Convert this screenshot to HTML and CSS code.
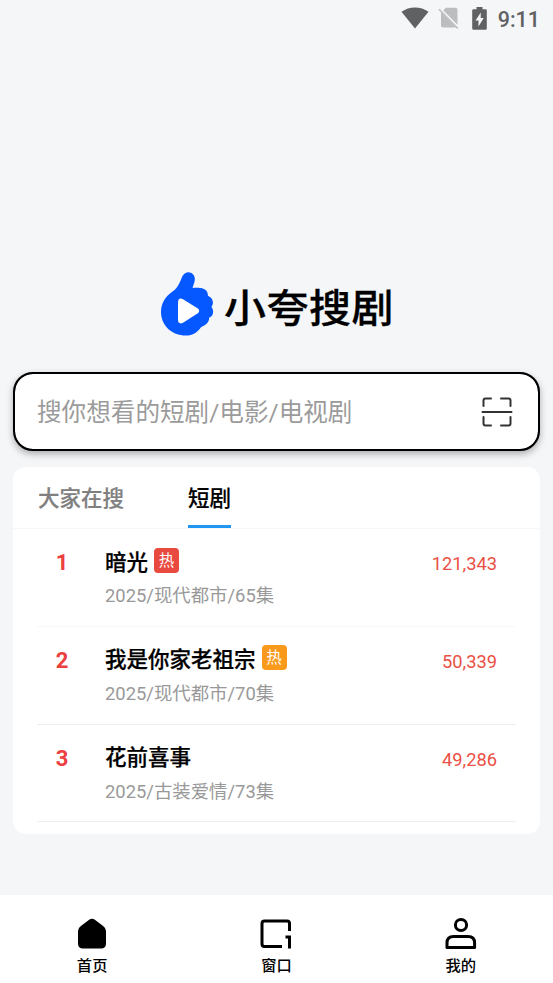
FILE: index.html
```html
<!DOCTYPE html>
<html lang="zh-CN">
<head>
<meta charset="utf-8">
<title>小夸搜剧</title>
<link rel="stylesheet" href="styles.css">
</head>
<body>
<header class="status">
  <svg class="wifi" width="28" height="22" viewBox="0 0 28 22"><path d="M14 21.500 0.500 4.800Q6.500.4 14 .4T27.500 4.800Z" fill="#606163"/></svg>
  <svg class="sim" width="22" height="24" viewBox="0 0 22 24"><path d="M5.200 4.200 8 1.800h9.500q2 0 2 2v15ZM3.400 6.500l14.300 15H5q-2 0-2-2V7Z" fill="#bcbdbf"/><path d="M1 3.300 19.800 22.500" stroke="#bcbdbf" stroke-width="1.600"/></svg>
  <svg class="battery" width="15" height="23" viewBox="0 0 15 23"><path d="M4.500 0h6v2.200h3q1.300 0 1.300 1.300v18q0 1.300-1.300 1.300h-12Q.2 22.800.2 21.500v-18Q.2 2.200 1.500 2.200h3Z" fill="#606163"/><path d="M8.800 5.500 3.500 13.500h3v6l5.200-8.500h-3Z" fill="#f4f5f7"/></svg>
  <span class="time">9:11</span>
</header>
<main>
  <h1 class="brand">
    <svg width="54" height="66" viewBox="0 0 54 66"><path d="M22.500 5C24.500 1.500 28 .3 31 1.800c4 2 4.500 6.200 3.200 10l-1.700 5.200c4-.3 8-.3 11.400 1 2.800 1.300 4.200 3.800 4 6.700 5 1.800 6.500 7.500 3.500 11.300 3 3.500 2 9-2.300 10.800.3 4.500-3 7.200-8.100 9.400C37 61.500 33 64.500 26 64.500 11.500 64.500 1 54 1 41c0-9 4.500-15.500 11.500-20.500C18.500 16.500 20 10.500 22.500 5Z" fill="#0558ff"/><path d="M18 31.500v17c0 3.500 2 4.800 5 3.200l14.500-9.200c2.300-1.600 2.300-3.700 0-5.200L23 28.200C20 26.500 18 27.800 18 31.500Z" fill="#fff"/></svg>
    <span>小夸搜剧</span>
  </h1>
  <div class="search">
    <span class="placeholder">搜你想看的短剧/电影/电视剧</span>
    <svg width="32" height="32" viewBox="0 0 32 32" fill="none" stroke="#333" stroke-width="2" stroke-linecap="round"><path d="M2.500 10V4.500q0-2 2-2H10M20 2.500h7.500q2 0 2 2V10M2.500 21v6.500q0 2 2 2H10M20 29.500h7.500q2 0 2-2V21M1.500 16h29"/></svg>
  </div>
  <section class="card">
    <nav class="tabs"><span class="tab">大家在搜</span><span class="tab active">短剧</span></nav>
    <ol class="list">
      <li class="row"><span class="rank">1</span><div class="info"><div class="title">暗光<span class="hot red">热</span></div><div class="meta">2025/现代都市/65集</div></div><span class="count">121,343</span></li>
      <li class="row"><span class="rank">2</span><div class="info"><div class="title">我是你家老祖宗<span class="hot">热</span></div><div class="meta">2025/现代都市/70集</div></div><span class="count">50,339</span></li>
      <li class="row"><span class="rank">3</span><div class="info"><div class="title">花前喜事</div><div class="meta">2025/古装爱情/73集</div></div><span class="count">49,286</span></li>
    </ol>
  </section>
</main>
<footer class="bottom">
  <a class="item"><svg width="34" height="34" viewBox="0 0 34 34"><path d="M14.500 2.600q2.500-1.600 5 0l8.300 6.200Q31 11 31 14v12.500q0 5-5 5H8q-5 0-5-5V14q0-3 3.200-5.200Z"/></svg><span>首页</span></a>
  <a class="item"><svg width="34" height="34" viewBox="0 0 34 34" fill="none" stroke="#000" stroke-width="3"><path d="M23 29.500H5.500Q3 29.500 3 27V6.500Q3 4 5.500 4h22.500q2.500 0 2.500 2.500V14"/><path d="M26.500 20h4v11.500"/></svg><span>窗口</span></a>
  <a class="item"><svg width="34" height="34" viewBox="0 0 34 34" fill="none" stroke="#000" stroke-width="3"><circle cx="17" cy="8" r="5.600"/><path d="M3 30.500v-4.500q0-6.500 6.500-6.500h14.600q6.500 0 6.500 6.500v4.500Z" stroke-linejoin="round"/></svg><span>我的</span></a>
</footer>
</body>
</html>
```
FILE: styles.css
```css
* { box-sizing: border-box; }
body {
  margin: 0;
  height: 983px;
  display: flex;
  flex-direction: column;
  overflow: hidden;
  background: #f4f6f8;
  color: #000;
  font-family: Roboto, "Noto Sans CJK SC", sans-serif;
}
svg { display: block; flex: none; }
.status {
  height: 38px;
  padding: 0 13px 2px 0;
  display: flex;
  align-items: center;
  justify-content: flex-end;
  color: #606163;
}
.sim { margin-left: 9px; }
.battery { margin-left: 12px; }
.time { margin-left: 11px; font-size: 21.500px; font-weight: 500; line-height: 38px; padding-top: 3px; }
main { flex: 1; padding: 233px 13px 0; }
.brand {
  margin: 0 0 35px;
  height: 66px;
  display: flex;
  align-items: center;
  padding-left: 147px;
  font-size: 42px;
  font-weight: 500;
  line-height: 66px;
}
.brand span {
  margin-left: 10px;
  letter-spacing: .5px;
  white-space: nowrap;
  transform: translateY(5px) scaleY(.93);
  -webkit-text-stroke: .3px #000;
}
.search {
  height: 79px;
  display: flex;
  align-items: center;
  justify-content: space-between;
  padding: 0 25px 0 22px;
  border: 2px solid #000;
  outline: .5px solid #000;
  outline-offset: -2.500px;
  border-radius: 20px;
  background: #fff;
  box-shadow: 0 3px 7px rgba(0, 0, 0, .3);
}
.placeholder { font-size: 24.600px; color: #9b9b9b; line-height: 36px; padding-top: 3px; }
.card {
  margin-top: 16px;
  height: 367px;
  border-radius: 13px;
  background: #fff;
}
.tabs {
  display: flex;
  gap: 64px;
  height: 62px;
  padding: 0 25px;
  border-bottom: 1px solid #f8f8f8;
}
.tab { height: 61px; font-size: 21.500px; font-weight: 500; line-height: 63px; color: #808080; -webkit-text-stroke: .2px; }
.tab.active { color: #000; border-bottom: 3px solid #2196f3; }
.list { list-style: none; margin: 0; padding: 0 24px; }
.row {
  height: 97.800px;
  display: flex;
  align-items: flex-start;
  border-bottom: 1px solid #eee;
}
.row:first-child { border-color: #f8f8f8; }
.rank { width: 50px; margin-right: 18px; text-align: center; color: #ed4040; font-size: 22px; font-weight: 700; line-height: 30px; padding-top: 19px; }
.info { flex: 1; padding-top: 15px; }
.title { display: flex; align-items: center; height: 32px; font-size: 21.500px; font-weight: 500; -webkit-text-stroke: .25px; }
.hot { width: 25px; height: 25px; margin-left: 6px; border-radius: 4px; background: #fa9a1d; color: #fff; font-size: 15.500px; font-weight: 400; line-height: 27px; text-align: center; -webkit-text-stroke: 0; }
.hot.red { background: #e94a3f; }
.meta { margin-top: 5px; font-size: 18.400px; line-height: 30px; color: #999; }
.count { padding: 20px 19px 0 0; font-size: 18.300px; line-height: 30px; color: #ea5045; }
.bottom { height: 88px; display: flex; background: #fff; }
.item { flex: 1; display: flex; flex-direction: column; align-items: center; padding-top: 22px; font-size: 15.300px; font-weight: 500; }
.item span { margin-top: 4px; line-height: 22px; }
```
